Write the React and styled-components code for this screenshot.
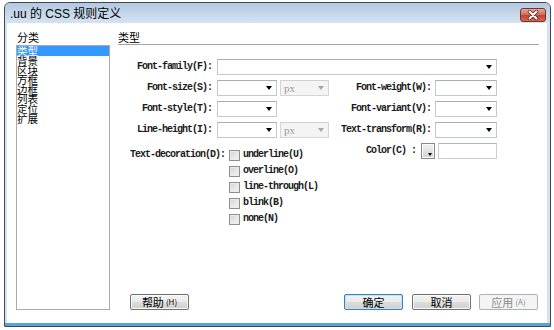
import React from "react";
import styled, { createGlobalStyle } from "styled-components";

const Global = createGlobalStyle`
  html, body { margin: 0; padding: 0; background: #ffffff; }
  body { width: 554px; height: 330px; overflow: hidden; }
  * { box-sizing: border-box; }
`;

const Page = styled.div`
  width: 554px;
  height: 330px;
  padding: 2px 3px 3px 4px;
  background: #ffffff;
`;

const Window = styled.div`
  height: 100%;
  display: flex;
  flex-direction: column;
  border: 1px solid #3d4a59;
  border-radius: 6px 6px 0 0;
  background: linear-gradient(to top, #5aa3da 0 3px, #d4e2f1 3px);
  padding: 0 3px 3px 2px;
  font-family: "Liberation Sans", "Noto Sans CJK SC", sans-serif;
`;

const TitleBar = styled.div`
  height: 20px;
  margin: 0 -3px 0 -2px;
  padding: 0 4px 0 5px;
  display: flex;
  align-items: center;
  justify-content: space-between;
  border-radius: 5px 5px 0 0;
  background: linear-gradient(to bottom, #b3c7e0, #c9d9ec 60%, #d4e2f1);
`;

const Title = styled.div`
  font-size: 12px;
  color: #000;
  line-height: 14px;
  padding-top: 1px;
`;

const CloseButton = styled.div`
  width: 26px;
  height: 14px;
  margin-top: 3px;
  border: 1px solid #7a3128;
  border-radius: 3px;
  background: linear-gradient(to bottom, #e5a89f, #d0705f 45%, #c2432f 55%, #d66a55);
  display: flex;
  align-items: center;
  justify-content: center;
`;

const Client = styled.div`
  flex: 1;
  display: flex;
  gap: 8px;
  padding: 0 8px 13px 9px;
  background: #ffffff;
  font-family: "Noto Sans CJK SC", "Liberation Sans", sans-serif;
`;

const LeftColumn = styled.div`
  width: 94px;
  display: flex;
  flex-direction: column;
`;

const SectionLabel = styled.div`
  height: 22px;
  display: flex;
  align-items: flex-end;
  padding: 0 0 1px 1px;
  font-size: 11px;
  line-height: 14px;
  color: #000;
`;

const ListBox = styled.div`
  flex: 1;
  border: 1px solid #a9abb0;
  background: #fff;
  display: flex;
  flex-direction: column;
`;

const ListItem = styled.div`
  height: ${(p) => (p.$selected ? 10 : 9.6)}px;
  line-height: ${(p) => (p.$selected ? 10 : 9.6)}px;
  font-size: 10.5px;
  white-space: nowrap;
  color: ${(p) => (p.$selected ? "#fff" : "#000")};
  background: ${(p) => (p.$selected ? "#3399ff" : "transparent")};
`;

const RightColumn = styled.div`
  flex: 1;
  display: flex;
  flex-direction: column;
`;

const PanelHeader = styled.div`
  height: 22px;
  display: flex;
  align-items: flex-end;
  border-bottom: 1px solid #a5a5a5;
  font-size: 11px;
  line-height: 14px;
  color: #000;
`;

const FormGrid = styled.div`
  margin-top: 14px;
  display: grid;
  grid-template-columns: 99px 112px 106px 62px;
  grid-template-rows: repeat(4, 16px) auto;
  row-gap: 5px;
  align-items: center;
`;

const monoText = `
  font-family: "Liberation Mono", "DejaVu Sans Mono", monospace;
  font-size: 10px;
  letter-spacing: -1px;
  font-weight: bold;
  color: #1a1a1a;
  white-space: nowrap;
`;

const FieldLabel = styled.div`
  ${monoText}
  text-align: right;
  padding-right: ${(p) => p.$pad}px;
  line-height: 16px;
`;

const FieldCell = styled.div`
  display: flex;
  align-items: center;
  gap: 3px;
  grid-column: ${(p) => p.$span || "auto"};
`;

const SelectBox = styled.div`
  width: ${(p) => p.$w}px;
  height: 16px;
  border: 1px solid ${(p) => (p.$disabled ? "#d5d5d5" : "#c3c8d0")};
  border-top-color: ${(p) => (p.$disabled ? "#cfcfcf" : "#abadb3")};
  background: ${(p) => (p.$disabled ? "#f4f4f4" : "#ffffff")};
  display: flex;
  align-items: center;
  justify-content: space-between;
  padding: 0 4px 0 3px;
`;

const SelectValue = styled.span`
  font-family: "Liberation Serif", serif;
  font-size: 11px;
  color: #9a9a9a;
  line-height: 14px;
`;

const Arrow = styled.span`
  margin-left: auto;
  width: 0;
  height: 0;
  border-left: 3.5px solid transparent;
  border-right: 3.5px solid transparent;
  border-top: 4px solid ${(p) => (p.$disabled ? "#a8a8a8" : "#000")};
`;

const DecoBlock = styled.div`
  grid-column: 1 / span 2;
  align-self: start;
  display: flex;
  padding: 4px 0 0 12px;
`;

const DecoLabel = styled.div`
  ${monoText}
  line-height: 16px;
  margin-right: 4px;
`;

const CheckList = styled.div`
  display: flex;
  flex-direction: column;
`;

const CheckRow = styled.div`
  height: 16px;
  display: flex;
  align-items: center;
  gap: 3px;
`;

const CheckBox = styled.span`
  width: 11px;
  height: 11px;
  border: 1px solid #909090;
  background: linear-gradient(135deg, #d6d6d6, #f6f6f6);
  box-shadow: inset 0 0 0 1px #eaeaea;
`;

const CheckText = styled.span`
  ${monoText}
  line-height: 16px;
`;

const ColorCell = styled.div`
  align-self: start;
  display: flex;
  align-items: center;
  justify-content: flex-end;
  gap: 5px;
  height: 16px;
`;

const Swatch = styled.span`
  position: relative;
  width: 14px;
  height: 16px;
  border: 1px solid #8a8a8a;
  background: linear-gradient(to bottom, #f2f2f2, #d2d2d2);
  box-shadow: inset 0 0 0 1px #fafafa;
`;

const SwatchArrow = styled.span`
  position: absolute;
  right: 2px;
  bottom: 2px;
  width: 0;
  height: 0;
  border-left: 2.5px solid transparent;
  border-right: 2.5px solid transparent;
  border-top: 3px solid #000;
`;

const TextInput = styled.div`
  align-self: start;
  margin-left: 3px;
  width: 59px;
  height: 16px;
  border: 1px solid #c9ced6;
  border-top-color: #b3b6bd;
  background: #fff;
`;

const ButtonRow = styled.div`
  margin-top: auto;
  display: flex;
  align-items: center;
  padding: 0 1px 0 12px;
`;

const Button = styled.div`
  width: 59px;
  height: 16px;
  margin-left: ${(p) => p.$ml || 0}px;
  border: 1px solid ${(p) => (p.$primary ? "#3c7fb1" : p.$disabled ? "#adb2b5" : "#707070")};
  border-radius: 2px;
  background: ${(p) =>
    p.$disabled
      ? "#f4f4f4"
      : "linear-gradient(to bottom, #f2f2f2 0%, #ebebeb 48%, #dddddd 52%, #cfcfcf 100%)"};
  box-shadow: ${(p) => (p.$primary ? "inset 0 0 0 1px #bfe4f8" : p.$disabled ? "none" : "inset 0 0 0 1px #fafafa")};
  display: flex;
  align-items: center;
  justify-content: center;
  font-size: 11px;
  line-height: 14px;
  color: ${(p) => (p.$disabled ? "#8a8a8a" : "#000")};
  white-space: nowrap;
`;

const Mnemonic = styled.span`
  font-size: 8px;
  margin-left: 2px;
`;

const Spacer = styled.div`
  flex: 1;
`;

const Select = ({ w, disabled, value }) => (
  <SelectBox $w={w} $disabled={disabled}>
    {value ? <SelectValue>{value}</SelectValue> : null}
    <Arrow $disabled={disabled} />
  </SelectBox>
);

const categories = ["类型", "背景", "区块", "方框", "边框", "列表", "定位", "扩展"];
const decorations = ["underline(U)", "overline(O)", "line-through(L)", "blink(B)", "none(N)"];

export default function App() {
  return (
    <>
      <Global />
      <Page>
        <Window>
          <TitleBar>
            <Title>.uu 的 CSS 规则定义</Title>
            <CloseButton>
              <svg width="12" height="10" viewBox="0 0 12 10">
                <path d="M2.5 1.5 L9.5 8.5 M9.5 1.5 L2.5 8.5" stroke="#5a1e18" strokeWidth="3.4" strokeLinecap="round" />
                <path d="M2.5 1.5 L9.5 8.5 M9.5 1.5 L2.5 8.5" stroke="#ffffff" strokeWidth="2" strokeLinecap="round" />
              </svg>
            </CloseButton>
          </TitleBar>
          <Client>
            <LeftColumn>
              <SectionLabel>分类</SectionLabel>
              <ListBox>
                {categories.map((c, i) => (
                  <ListItem key={c} $selected={i === 0}>
                    {c}
                  </ListItem>
                ))}
              </ListBox>
            </LeftColumn>
            <RightColumn>
              <PanelHeader>类型</PanelHeader>
              <FormGrid>
                <FieldLabel $pad={5}>Font-family(F):</FieldLabel>
                <FieldCell $span="2 / span 3">
                  <Select w={280} />
                </FieldCell>

                <FieldLabel $pad={5}>Font-size(S):</FieldLabel>
                <FieldCell>
                  <Select w={60} />
                  <Select w={49} disabled value="px" />
                </FieldCell>
                <FieldLabel $pad={4}>Font-weight(W):</FieldLabel>
                <FieldCell>
                  <Select w={62} />
                </FieldCell>

                <FieldLabel $pad={5}>Font-style(T):</FieldLabel>
                <FieldCell>
                  <Select w={60} />
                </FieldCell>
                <FieldLabel $pad={4}>Font-variant(V):</FieldLabel>
                <FieldCell>
                  <Select w={62} />
                </FieldCell>

                <FieldLabel $pad={5}>Line-height(I):</FieldLabel>
                <FieldCell>
                  <Select w={60} />
                  <Select w={49} disabled value="px" />
                </FieldCell>
                <FieldLabel $pad={4}>Text-transform(R):</FieldLabel>
                <FieldCell>
                  <Select w={62} />
                </FieldCell>

                <DecoBlock>
                  <DecoLabel>Text-decoration(D):</DecoLabel>
                  <CheckList>
                    {decorations.map((d) => (
                      <CheckRow key={d}>
                        <CheckBox />
                        <CheckText>{d}</CheckText>
                      </CheckRow>
                    ))}
                  </CheckList>
                </DecoBlock>
                <ColorCell>
                  <FieldLabel $pad={0}>Color(C) :</FieldLabel>
                  <Swatch>
                    <SwatchArrow />
                  </Swatch>
                </ColorCell>
                <TextInput />
              </FormGrid>
              <ButtonRow>
                <Button>
                  帮助<Mnemonic>(H)</Mnemonic>
                </Button>
                <Spacer />
                <Button $primary>确定</Button>
                <Button $ml={9}>取消</Button>
                <Button $ml={8} $disabled>
                  应用<Mnemonic>(A)</Mnemonic>
                </Button>
              </ButtonRow>
            </RightColumn>
          </Client>
        </Window>
      </Page>
    </>
  );
}
